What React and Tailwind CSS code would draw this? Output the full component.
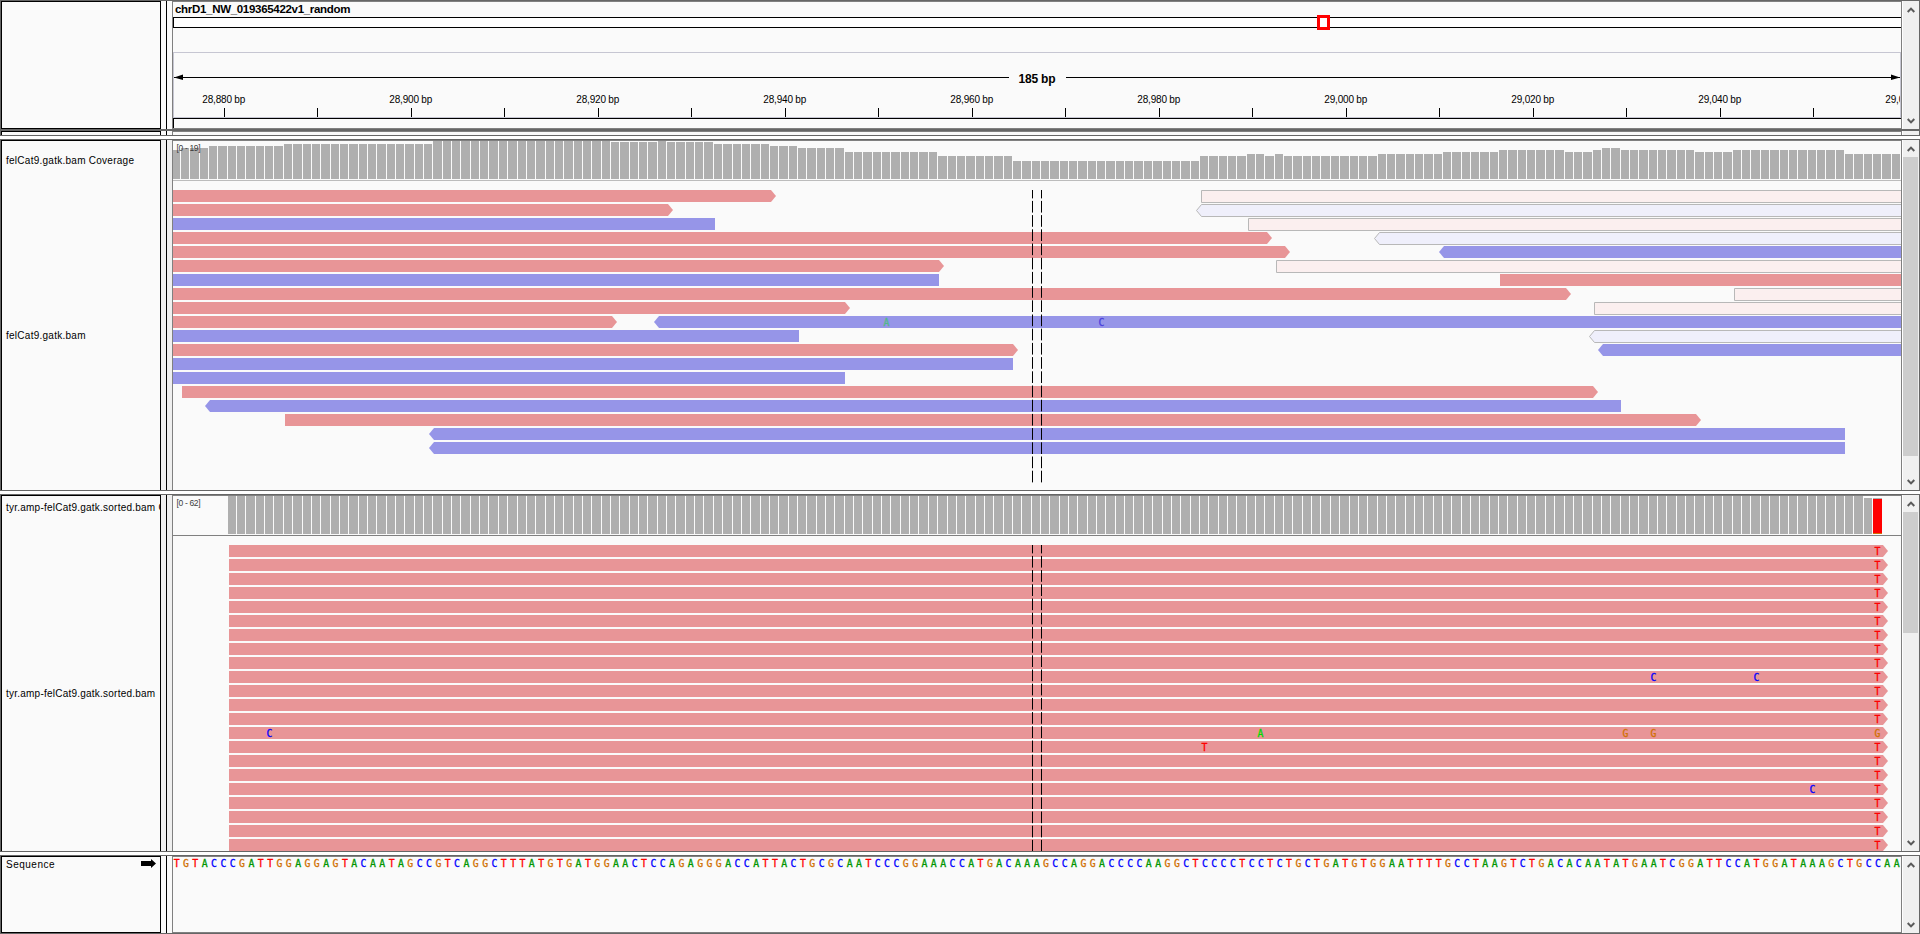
import React from "react";

const BASE = 9.348;
const bx = (i) => (i === 0 ? 173 : Math.round(181 + (i - 1) * BASE));
const cx = (i) => 176.6 + i * BASE;

const SEQUENCE =
  "TGTACCCGATTGGAGGAGTACAATAGCCGTCA" +
  "GGCTTTATGTGATGGAACTCCAGAGGGACCATTACTGCGCAATCCCGGAAACCATGA" +
  "CAAAGCCAGGACCCCAAGGCTCCCCTCCTCTGCTGATGTGGAATTTTGCCTAA" +
  "GTCTGACACAATATGAATCGGATTCCATGGATAAAGCTGCCAA";

const BASE_COLORS = { A: "#009600", C: "#0000ff", G: "#d17105", T: "#ff0000" };

const PINK = "#e89597";
const BLUE = "#9695e8";

// [first base, last base, y of the bar's top]
const COVERAGE = [
  [0, 0, 150], [1, 3, 148], [4, 11, 146], [12, 27, 144], [28, 46, 141],
  [47, 51, 142], [52, 52, 141], [53, 57, 142], [58, 63, 144], [64, 66, 146],
  [67, 71, 148], [72, 81, 152], [82, 89, 156], [90, 109, 161], [110, 114, 156],
  [115, 116, 154], [117, 117, 156], [118, 118, 154], [119, 128, 156],
  [129, 135, 154], [136, 141, 152], [142, 148, 150], [149, 151, 152],
  [152, 152, 150], [153, 154, 148], [155, 162, 150], [163, 166, 152],
  [167, 178, 150], [179, 184, 154],
];

// row, start, end, strand, arrow, hollow
const READS = [
  [0, 160, 771, "+", true, false], [0, 1201, 1960, "+", false, true],
  [1, 160, 668, "+", true, false], [1, 1201, 1960, "-", true, true],
  [2, 160, 715, "-", false, false], [2, 1248, 1960, "+", false, true],
  [3, 160, 1267, "+", true, false], [3, 1379, 1960, "-", true, true],
  [4, 160, 1285, "+", true, false], [4, 1444, 1960, "-", true, false],
  [5, 160, 939, "+", true, false], [5, 1276, 1960, "+", false, true],
  [6, 160, 939, "-", false, false], [6, 1500, 1960, "+", false, false],
  [7, 160, 1566, "+", true, false], [7, 1734, 1960, "+", false, true],
  [8, 160, 845, "+", true, false], [8, 1594, 1960, "+", false, true],
  [9, 160, 612, "+", true, false], [9, 659, 1960, "-", true, false],
  [10, 160, 799, "-", false, false], [10, 1594, 1960, "-", true, true],
  [11, 160, 1013, "+", true, false], [11, 1603, 1960, "-", true, false],
  [12, 160, 1013, "-", false, false],
  [13, 160, 845, "-", false, false],
  [14, 182, 1593, "+", true, false],
  [15, 210, 1621, "-", true, false],
  [16, 285, 1696, "+", true, false],
  [17, 434, 1845, "-", true, false],
  [18, 434, 1845, "-", true, false],
];

const MISMATCHES = [
  [9, 1653.5, "C"], [9, 1756.5, "C"], [13, 269.5, "C"], [13, 1260.5, "A"],
  [13, 1625.5, "G"], [13, 1653.5, "G"], [14, 1204.5, "T"], [17, 1812.5, "C"],
];

function Read({ x1, x2, y, strand, arrow, hollow }) {
  const fwd = strand === "+";
  const h = 12;
  const o = hollow ? 0.5 : 0;
  const a = x1 + o;
  const t = y + o;
  const m = t + h / 2;
  let pts = `${a},${t} ${x2},${t} ${x2},${t + h} ${a},${t + h}`;
  if (arrow && fwd) pts = `${a},${t} ${x2},${t} ${x2 + 5},${m} ${x2},${t + h} ${a},${t + h}`;
  if (arrow && !fwd) pts = `${a},${t} ${x2},${t} ${x2},${t + h} ${a},${t + h} ${a - 5},${m}`;
  return hollow ? (
    <polygon points={pts} fill={fwd ? "#fbefef" : "#efeffb"} stroke="#b8b8b8" strokeWidth="1" />
  ) : (
    <polygon points={pts} fill={fwd ? PINK : BLUE} />
  );
}

function Letter({ x, y, c, color }) {
  const fill = color || BASE_COLORS[c];
  return (
    <text x={x} y={y} textAnchor="middle" fill={fill} stroke={fill} strokeWidth="0.3" className="font-['DejaVu_Sans_Mono'] text-[9.8px]">
      {c}
    </text>
  );
}

function Track({ y, h, children }) {
  return (
    <svg width="1728" height={h} viewBox={`173 ${y} 1728 ${h}`} className="block shrink-0">
      {children}
    </svg>
  );
}

function Chevron({ up }) {
  return (
    <svg width="8" height="6" viewBox="0 0 8 6" className="block">
      <path d={up ? "M0.7 5L4 1.6L7.3 5" : "M0.7 1L4 4.4L7.3 1"} fill="none" stroke="#5a5a5a" strokeWidth="2" />
    </svg>
  );
}

function ScrollBar({ thumb, arrows = true }) {
  return (
    <div className="flex w-[16px] shrink-0 flex-col bg-[#f0f0f0]">
      {arrows && (
        <>
          <div className="flex h-[17px] w-[15px] shrink-0 items-center justify-center"><Chevron up /></div>
          <div className="flex-1">{thumb && <div className={`w-[15px] bg-[#cdcdcd] ${thumb}`} />}</div>
          <div className="flex h-[16px] w-[15px] shrink-0 items-center justify-center"><Chevron /></div>
        </>
      )}
    </div>
  );
}

function Panel({ height, gutter = "bg-[#fafafa]", boxBorder = "", paneBorder = "", names, thumb, arrows, children }) {
  return (
    <div className={`flex w-full shrink-0 border-x border-[#666666] bg-[#fafafa] ${height}`}>
      <div className={`flex w-[160px] shrink-0 flex-col overflow-hidden border-x border-t border-black bg-[#fafafa] ${boxBorder}`}>{names}</div>
      <div className={`w-[5px] shrink-0 ${gutter}`} />
      <div className="w-px shrink-0 bg-black" />
      <div className={`w-[5px] shrink-0 ${gutter}`} />
      <div className={`flex w-[1730px] shrink-0 flex-col overflow-hidden border-x border-t border-[#808080] bg-[#fafafa] ${paneBorder}`}>{children}</div>
      <div className="w-px shrink-0 bg-white" />
      <ScrollBar thumb={thumb} arrows={arrows} />
    </div>
  );
}

const Rule = () => <div className="h-px w-full shrink-0 bg-[#666666]" />;
const Gap = () => <div className="h-[3px] w-full shrink-0 bg-white" />;
const NAME = "whitespace-nowrap pl-1 font-['Liberation_Sans'] text-[10px] leading-[12px] text-black";

function Guides({ y1, y2 }) {
  return [1032.5, 1041.5].map((x) => (
    <line key={x} x1={x} x2={x} y1={y1} y2={y2} stroke="black" strokeDasharray="11.7 2.5" strokeDashoffset="3.3" />
  ));
}

function Ruler() {
  const ticks = Array.from({ length: 18 }, (_, i) => ({ x: Math.floor(224.4 + i * 93.5), i }));
  return (
    <Track y={2} h={126}>
      <text x="175" y="13" textLength="175.5" className="font-['Liberation_Sans'] text-[11.5px] font-bold">chrD1_NW_019365422v1_random</text>
      <rect x="173.5" y="17.5" width="1740" height="10" fill="white" stroke="black" />
      <rect x="1318.5" y="16.5" width="10" height="12" fill="white" stroke="red" strokeWidth="3" />
      <rect x="173.5" y="52.5" width="1727" height="65" fill="none" stroke="#c6c6d2" />
      <rect x="174" y="77" width="835" height="1" />
      <rect x="1066" y="77" width="834" height="1" />
      <path d="M174 77.5L183 74.5V80Z" />
      <path d="M1900 77.5L1891 74.5V80Z" />
      <text x="1037" y="83" textAnchor="middle" textLength="37" className="font-['Liberation_Sans'] text-[12px] font-bold">185 bp</text>
      {ticks.map(({ x, i }) => (
        <rect key={i} x={x} y="108" width="1" height="9" />
      ))}
      <svg x="174" y="90" width="1726" height="20" viewBox="174 90 1726 20">
        {Array.from({ length: 10 }, (_, i) => (
          <text key={i} x={202.3 + i * 187} y="103" textLength="43" className="font-['Liberation_Sans'] text-[10px]">
            {(28880 + i * 20).toLocaleString("en-US")} bp
          </text>
        ))}
      </svg>
      <rect x="173.5" y="118.5" width="1740" height="20" fill="#fafafa" stroke="black" />
    </Track>
  );
}

function GenomeTrack() {
  const bars = COVERAGE.flatMap(([a, b, top]) =>
    Array.from({ length: b - a + 1 }, (_, k) => ({ i: a + k, top }))
  );
  return (
    <Track y={141} h={349}>
      {bars.map(({ i, top }) => (
        <rect key={i} x={bx(i)} y={top} width={bx(i + 1) - bx(i) - 1} height={179 - top} fill="#afafaf" />
      ))}
      <text x="176.5" y="150.5" textLength="24" fill="#3c3c3c" className="font-['Liberation_Sans'] text-[8.5px]">[0 - 19]</text>
      <rect x="173" y="180" width="1728" height="1" fill="#bcbcbc" />
      {READS.map(([row, x1, x2, strand, arrow, hollow], k) => (
        <Read key={k} x1={x1} x2={x2} y={190 + row * 14} strand={strand} arrow={arrow} hollow={hollow} />
      ))}
      <Letter x={886.5} y={326} c="A" color="#52b88a" />
      <Letter x={1101.5} y={326} c="C" color="#4b3fdc" />
      <Guides y1={190} y2={484} />
    </Track>
  );
}

function AmpliconTrack() {
  return (
    <Track y={496} h={355}>
      {Array.from({ length: 176 }, (_, k) => k + 6).map((i) => {
        const top = i === 181 ? 498 : 496;
        return <rect key={i} x={bx(i)} y={top} width={bx(i + 1) - bx(i) - 1} height={534 - top} fill="#afafaf" />;
      })}
      <rect x="1873" y="498" width="9" height="1" fill="#afafaf" />
      <rect x="1873" y="499" width="9" height="34" fill="#ff0000" />
      <rect x="1873" y="533" width="9" height="1" fill="#d17105" />
      <text x="176.5" y="505.5" textLength="24" fill="#3c3c3c" className="font-['Liberation_Sans'] text-[8.5px]">[0 - 62]</text>
      <rect x="173" y="535" width="1728" height="1" fill="#808080" />
      {Array.from({ length: 22 }, (_, r) => (
        <g key={r}>
          <Read x1={229} x2={1883} y={545 + r * 14} strand="+" arrow />
          <Letter x={1877.5} y={555 + r * 14} c={r === 13 ? "G" : "T"} />
        </g>
      ))}
      {MISMATCHES.map(([r, x, c], k) => (
        <Letter key={k} x={x} y={555 + r * 14} c={c} color={c === "A" ? "#00dc00" : undefined} />
      ))}
      <Guides y1={545} y2={851} />
    </Track>
  );
}

export default function App() {
  return (
    <div className="flex h-[934px] w-[1920px] flex-col overflow-hidden bg-[#fafafa]">
      <Rule />
      <Panel height="h-[128px]" boxBorder="border-b" paneBorder="border-b">
        <Ruler />
      </Panel>
      <Rule />
      <Rule />
      <Panel height="h-[4px]" arrows={false} />
      <Rule />
      <Gap />
      <Rule />
      <Panel
        height="h-[350px]"
        gutter="bg-[#efefef]"
        thumb="h-[299px]"
        names={
          <>
            <div className={`${NAME} mt-[14px] tracking-[0.26px]`}>felCat9.gatk.bam Coverage</div>
            <div className={`${NAME} mt-[163px] tracking-[0.26px]`}>felCat9.gatk.bam</div>
          </>
        }
      >
        <GenomeTrack />
      </Panel>
      <Rule />
      <Gap />
      <Rule />
      <Panel
        height="h-[356px]"
        gutter="bg-[#efefef]"
        thumb="h-[121px]"
        names={
          <>
            <div className={`${NAME} mt-[6px] tracking-[0.23px]`}>tyr.amp-felCat9.gatk.sorted.bam Coverage</div>
            <div className={`${NAME} mt-[174px] tracking-[0.23px]`}>tyr.amp-felCat9.gatk.sorted.bam</div>
          </>
        }
      >
        <AmpliconTrack />
      </Panel>
      <Rule />
      <Gap />
      <Rule />
      <Panel
        height="h-[77px]"
        boxBorder="border-b"
        paneBorder="border-b"
        names={
          <div className="flex items-start justify-between pr-1">
            <span className={`${NAME} mt-[2px] tracking-[0.5px]`}>Sequence</span>
            <svg width="15" height="9" viewBox="0 0 15 9" className="mt-[2px] block">
              <path d="M0 2H10V0L15 4.5L10 9V7H0Z" />
            </svg>
          </div>
        }
      >
        <Track y={857} h={75}>
          {SEQUENCE.split("").map((c, i) => (
            <Letter key={i} x={cx(i)} y={867} c={c} />
          ))}
        </Track>
      </Panel>
      <Rule />
    </div>
  );
}
